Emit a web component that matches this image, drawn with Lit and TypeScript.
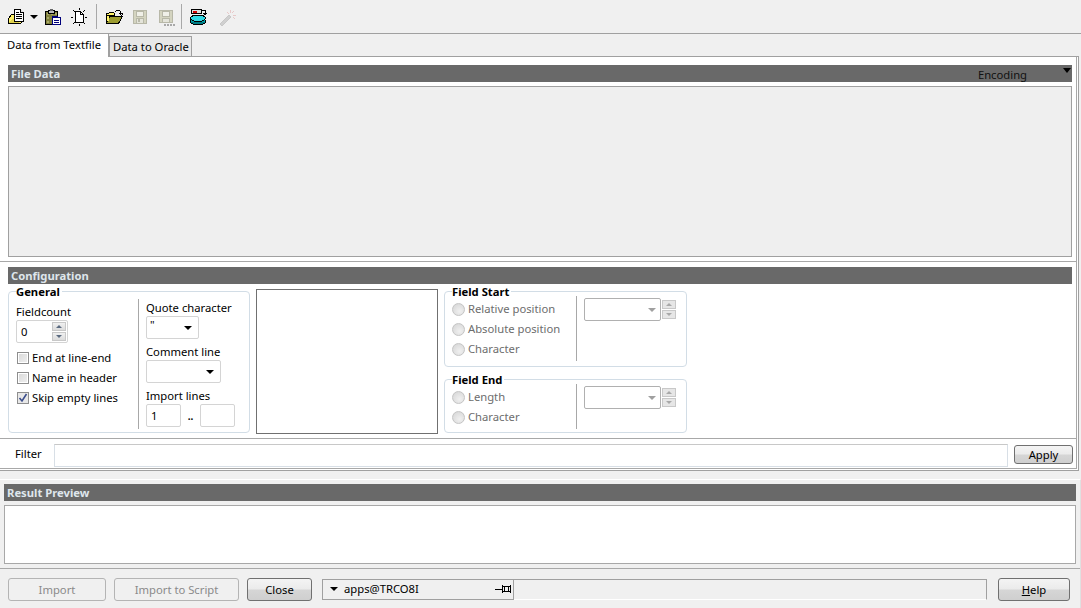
import { LitElement, html, css, svg } from "lit";
import { customElement } from "lit/decorators.js";

const I = {
  newList: svg`<path d="M1.500 10.500l3-4h4v6h7v1l-2 2h-12z" fill="#fff36a" stroke="#000"/><path d="M2 15l3-4h9l-2 4z" fill="#e0d24e"/><path d="M7.500 1.500h6l3 3v9h-9z" fill="#fff" stroke="#000"/><path d="M9 4h3M9 6h6M9 8h6M9 10h6" stroke="#000"/><path d="M13.500 1.500v3h3" fill="#ddd" stroke="#000"/>`,
  clip: svg`<path d="M1.500 3.500h12v13h-12z" fill="#80803c" stroke="#000"/><path d="M3 5h2v2H3zM7 5h2v2H7zM11 5h2v2h-2zM3 9h2v2H3zM3 13h2v2H3z" fill="#a8a868"/><path d="M4.500 2.500h6v3h-6z" fill="#bdbdbd" stroke="#000"/><path d="M6 1h3v2H6z" fill="#666"/><path d="M8.500 9.500h8v7h-8z" fill="#fff" stroke="#00007b"/><path d="M8 8h6v2H8z" fill="#00007b"/><path d="M10 12h5M10 14h5" stroke="#00007b"/>`,
  sun: svg`<path d="M5.500 3.500h5l3 3v8h-8z" fill="#fff" stroke="#000"/><path d="M10.500 3.500v3h3" fill="none" stroke="#000"/><path d="M3 2l2 2M15 2l-2 2M1 9h2M15 9h2M3 16l2-2M13 14l2 2M9 0v2M9 16v2" stroke="#000" fill="none"/>`,
  open: svg`<path d="M1.500 5.500h2l1-1h4l1 1v2h-8z" fill="#fff36a" stroke="#000"/><path d="M1.500 15.500l3-7h13l-4 7z" fill="#9c9c30" stroke="#000"/><path d="M1.500 5.500v10" stroke="#000"/><path d="M2 8h2v5H2z" fill="#fff36a"/><path d="M9.500 4.500l2-2h3l2 3M15 5.500h3l-1.500 2z" fill="none" stroke="#000"/>`,
  save: svg`<path d="M1.500 2.500h13v13h-13z" fill="#d4d4c0" stroke="#b8b8a8"/><path d="M4.500 3h7v5h-7z" fill="#f0f0e8" stroke="#b8b8a8"/><path d="M4.500 10.500h7v5h-7z" fill="#e4e4da" stroke="#b8b8a8"/><path d="M6 11h2v3H6z" fill="#b8b8a8"/>`,
  saveAll: svg`<path d="M1.500 2.500h13v12h-13z" fill="#d4d4c0" stroke="#b8b8a8"/><path d="M4.500 3h7v5h-7z" fill="#f0f0e8" stroke="#b8b8a8"/><path d="M4.500 10.500h7v4h-7z" fill="#e4e4da" stroke="#b8b8a8"/><path d="M6 16h2v2H6zM9 16h2v2H9zM12 16h2v2h-2zM15 16h2v2h-2z" fill="#a8a8a8"/>`,
  db: svg`<ellipse cx="9" cy="13.500" rx="7.500" ry="3.500" fill="#007c84" stroke="#000"/><path d="M2 10v3.500h14V10z" fill="#00a0a8"/><ellipse cx="9" cy="10.300" rx="7.500" ry="3.300" fill="#30d8e4" stroke="#000"/><path d="M2.500 1.500h10v4h-10z" fill="#dcdcdc" stroke="#000"/><path d="M4 3h4v2H4z" fill="#d00000"/><path d="M13 2h3v4M14.500 5l1.500 2 1.500-2" fill="none" stroke="#000"/>`,
  wand: svg`<path d="M2 16l9-9 2 2-9 9z" fill="#d0d0d0" stroke="#c8c8c8"/><path d="M12 2v3M14 5l2-2M15 7h3M9 4l2 2M15 9l2 2" stroke="#e8c8c8"/>`,
};

@customElement("app-root")
export class AppRoot extends LitElement {
  static styles = css`
    :host { display: flex; flex-direction: column; width: 1081px; height: 608px; overflow: hidden; background: #f0f0f0;
      font: 11.25px/16px "Noto Sans", sans-serif; color: #000; }
    * { box-sizing: border-box; }
    svg { display: block; flex: none; }
    .toolbar { height: 34px; flex: none; display: flex; align-items: center; padding-left: 7px; border-bottom: 1px solid #a0a0a0; }
    .sep { width: 1px; height: 25px; background: #a8a8a8; flex: none; }
    .arrow { width: 0; height: 0; border: 4px solid transparent; border-top: 4px solid #000; border-bottom: 0; flex: none; }
    .ml5 { margin-left: 5px; } .ml6 { margin-left: 6px; } .ml7 { margin-left: 7px; } .ml8 { margin-left: 8px; } .ml9 { margin-left: 9px; } .ml11 { margin-left: 11px; }
    .tabs { height: 22px; flex: none; display: flex; align-items: flex-end; white-space: nowrap; }
    .tab { height: 23px; width: 109px; background: #fff; padding: 3px 0 0 7px; margin-bottom: -1px; border-right: 1px solid #a0a0a0; position: relative; z-index: 1; }
    .tab2 { height: 20px; width: 83px; background: #e8e8e8; border: 1px solid #a0a0a0; border-bottom: 0; padding: 2px 0 0 3px; }
    .panel { height: 415px; width: 1079px; flex: none; background: #fff; border-top: 1px solid #a0a0a0; border-right: 1px solid #a0a0a0; border-bottom: 1px solid #a0a0a0; padding: 0 1px 1px 0; display: flex; flex-direction: column; }
    .inner { flex: 1; display: flex; flex-direction: column; padding: 8px 4px 0 8px; border-right: 1px solid #a8a8a8; border-bottom: 1px solid #a8a8a8; min-height: 0; }
    .head { height: 17px; flex: none; background: #696969; color: #dfe6ec; font-weight: 700; padding-left: 3px; line-height: 18px; display: flex; justify-content: space-between; }
    .enc { color: #111; font-weight: 400; margin-left: auto; margin-right: 36px; padding-top: 1px; }
    .encArrow { margin: 3px 1px 0 0; border-width: 4px; border-top-width: 5px; }
    .filebox { height: 171px; flex: none; margin-top: 4px; background: #efefef; border: 1px solid #a0a0a0; }
    .rule { height: 1px; background: #a8a8a8; flex: none; margin: 4px -4px 0 -8px; }
    .confhead { margin-top: 5px; }
    .config { display: flex; height: 150px; flex: none; margin-top: 4px; }
    .group { border: 1px solid #d2dde6; border-radius: 4px; position: relative; background: #fff; }
    .legend { position: absolute; left: 7px; top: -7px; line-height: 14px; font-weight: 700; color: #000; background: #fff; padding-right: 2px; }
    .general { width: 242px; height: 142px; margin-top: 3px; display: flex; padding-top: 7px; }
    .gl { width: 129px; flex: none; padding-left: 7px; padding-top: 5px; }
    .vdiv { width: 1px; background: #a8a8a8; flex: none; }
    .gdiv { height: 130px; }
    .gr { padding-left: 7px; flex: 1; }
    .lbl { height: 16px; display: block; }
    .input { border: 1px solid #d4d4d4; border-radius: 2px; background: #fff; display: flex; align-items: center; padding-left: 4px; position: relative; color: #000; }
    .spinin { width: 52px; height: 23px; margin: 0 0 5px; }
    .spin { margin-left: auto; margin-right: 1px; display: flex; flex-direction: column; gap: 1px; width: 14px; }
    .spin b { display: flex; align-items: center; justify-content: center; height: 9px; width: 14px; background: linear-gradient(#f0f0f0, #dcdcdc); border: 1px solid #c8c8c8; }
    .up { width: 0; height: 0; border: 3px solid transparent; border-bottom: 3px solid #5a6a80; border-top: 0; }
    .dn { width: 0; height: 0; border: 3px solid transparent; border-top: 3px solid #5a6a80; border-bottom: 0; }
    .check { display: flex; align-items: center; height: 20px; gap: 3px; margin-left: 1px; }
    .box { width: 12px; height: 12px; border: 1px solid #8e8e8e; background: linear-gradient(135deg, #d8d8d8, #f0f0f0); box-shadow: inset 0 0 0 1px #fff; flex: none; display: block; }
    .cb { display: flex; align-items: center; justify-content: space-between; padding: 0 6px 0 3px; color: #000; }
    .tri { width: 0; height: 0; border: 4px solid transparent; border-top: 4px solid #000; border-bottom: 0; }
    .quote { width: 53px; height: 23px; margin-bottom: 5px; align-items: flex-start; }
    .quote .tri { margin-top: 9px; }
    .comment { width: 75px; height: 23px; margin-bottom: 5px; }
    .q1 { margin-top: 1px; }
    .lines { display: flex; align-items: center; }
    .ln { width: 35px; height: 23px; }
    .dots { width: 19px; text-align: center; font-weight: 700; font-size: 10px; line-height: 18px; }
    .preview { width: 182px; height: 145px; margin: 1px 0 0 6px; background: #fff; border: 1px solid #707070; flex: none; }
    .fields { display: flex; flex-direction: column; margin: 3px 0 0 6px; }
    .fs { width: 243px; height: 76px; display: flex; }
    .fe { width: 243px; height: 54px; display: flex; margin-top: 12px; }
    .radios { width: 131px; flex: none; padding: 7px 0 0 7px; }
    .radio { display: flex; align-items: center; gap: 3px; height: 20px; color: #6d6d6d; }
    .dot { width: 13px; height: 13px; border-radius: 50%; border: 1px solid #c4c4c4; background: radial-gradient(circle at 60% 65%, #f0f0f0, #d4d4d4); flex: none; display: block; }
    .fdiv1 { height: 65px; margin-top: 4px; }
    .fdiv2 { height: 45px; margin-top: 4px; }
    .fcombo { display: flex; margin: 6px 0 0 7px; gap: 1px; height: 23px; }
    .fc { width: 77px; height: 23px; border: 1px solid #b0b0b0; border-radius: 2px; background: #fff; display: flex; align-items: center; justify-content: flex-end; padding-right: 4px; }
    .tg { width: 0; height: 0; border: 4px solid transparent; border-top: 4px solid #a0a0a0; border-bottom: 0; }
    .fspin { display: flex; flex-direction: column; gap: 1px; margin-top: 2px; }
    .fspin b { width: 14px; height: 9px; background: #e6e6e6; border: 1px solid #c8c8c8; display: flex; align-items: center; justify-content: center; }
    .fspin .up { border-bottom-color: #a8a8a8; } .fspin .dn { border-top-color: #a8a8a8; }
    .filterLine { height: 1px; background: #a8a8a8; flex: none; margin: 0 -4px 0 -8px; }
    .filter { display: flex; flex: 1; align-items: flex-start; padding: 5px 0 0 7px; margin-right: -4px; }
    .filter span { width: 39px; flex: none; line-height: 19px; }
    .finput { width: 954px; height: 23px; border: 1px solid #d8dfe6; border-top-color: #c8c8c8; background: #fff; flex: none; }
    .btn { border: 1px solid #707070; border-radius: 3px; background: linear-gradient(#f4f4f4 0%, #ebebeb 48%, #d6d6d6 52%, #cfcfcf 100%); text-align: center; flex: none; }
    .apply { width: 59px; height: 19px; margin: 1px 0 0 6px; line-height: 17px; }
    .lower { flex: 1; margin-top: 8px; padding: 0 4px; display: flex; flex-direction: column; border-top: 1px solid #fff; border-right: 1px solid #e0e0e0; }
    .lowerhead { margin-top: 4px; padding-left: 3px; }
    .result { height: 59px; flex: none; margin-top: 4px; background: #fff; border: 1px solid #a8a8a8; }
    .rule2 { height: 1px; background: #a8a8a8; flex: none; margin: 4px -4px 0; }
    .bar { display: flex; flex: 1; align-items: center; padding: 2px 7px 0 8px; margin: 0 -4px; }
    .b { height: 23px; line-height: 21px; }
    .dis { background: #f0f0f0; border-color: #b4b4b4; color: #8a8a8a; }
    .imp { width: 98px; } .imps { width: 125px; margin-left: 8px; } .close { width: 65px; margin-left: 8px; }
    .conn { width: 192px; height: 21px; margin: -1px 0 0 10px; border: 1px solid #a0a0a0; display: flex; align-items: center; padding-left: 7px; gap: 6px; flex: none; }
    .status { width: 473px; height: 21px; margin-top: -1px; border: 1px solid #a0a0a0; border-left: 0; border-bottom-color: #fff; border-right-color: #a0a0a0; flex: none; }
    .help { width: 72px; margin-left: 11px; }
    .pin { margin-left: auto; margin-right: 0; }
  `;

  private ic(p: unknown, cls = "") {
    return html`<svg class=${cls} width="18" height="18" viewBox="0 0 18 18" shape-rendering="crispEdges">${p}</svg>`;
  }

  render() {
    const up = html`<i class="up"></i>`;
    const dn = html`<i class="dn"></i>`;
    const fcombo = html`<div class="fcombo"><div class="fc"><i class="tg"></i></div><div class="fspin"><b>${up}</b><b>${dn}</b></div></div>`;
    return html`
      <div class="toolbar">
        ${this.ic(I.newList)}<i class="arrow ml5"></i>${this.ic(I.clip, "ml6")}${this.ic(I.sun, "ml8")}
        <i class="sep ml8"></i>${this.ic(I.open, "ml8")}${this.ic(I.save, "ml9")}${this.ic(I.saveAll, "ml8")}
        <i class="sep ml5"></i>${this.ic(I.db, "ml7")}${this.ic(I.wand, "ml11")}
      </div>
      <div class="tabs"><div class="tab">Data from Textfile</div><div class="tab2">Data to Oracle</div></div>
      <div class="panel"><div class="inner">
        <div class="head">File Data<span class="enc">Encoding</span><i class="arrow encArrow"></i></div>
        <div class="filebox"></div>
        <div class="rule"></div>
        <div class="head confhead">Configuration</div>
        <div class="config">
          <div class="group general">
            <span class="legend">General</span>
            <div class="gl">
              <span class="lbl">Fieldcount</span>
              <div class="input spinin">0<div class="spin"><b>${up}</b><b>${dn}</b></div></div>
              <div class="check"><i class="box"></i>End at line-end</div>
              <div class="check"><i class="box"></i>Name in header</div>
              <div class="check"><svg width="12" height="12" viewBox="0 0 12 12"><rect x=".5" y=".5" width="11" height="11" fill="#e8e8e8" stroke="#8e8e8e"/><path d="M2.500 6l2.500 3 4.500-7" fill="none" stroke="#3c4e8c" stroke-width="1.600"/></svg>Skip empty lines</div>
            </div>
            <i class="vdiv gdiv"></i>
            <div class="gr">
              <span class="lbl q1">Quote character</span>
              <div class="input cb quote">"<i class="tri"></i></div>
              <span class="lbl">Comment line</span>
              <div class="input cb comment"><span></span><i class="tri"></i></div>
              <span class="lbl">Import lines</span>
              <div class="lines"><div class="input ln">1</div><span class="dots">..</span><div class="input ln"></div></div>
            </div>
          </div>
          <div class="preview"></div>
          <div class="fields">
            <div class="group fs">
              <span class="legend">Field Start</span>
              <div class="radios">
                <div class="radio"><i class="dot"></i>Relative position</div>
                <div class="radio"><i class="dot"></i>Absolute position</div>
                <div class="radio"><i class="dot"></i>Character</div>
              </div>
              <i class="vdiv fdiv1"></i>${fcombo}
            </div>
            <div class="group fe">
              <span class="legend">Field End</span>
              <div class="radios">
                <div class="radio"><i class="dot"></i>Length</div>
                <div class="radio"><i class="dot"></i>Character</div>
              </div>
              <i class="vdiv fdiv2"></i>${fcombo}
            </div>
          </div>
        </div>
        <div class="filterLine"></div>
        <div class="filter"><span>Filter</span><div class="finput"></div><div class="btn apply">Apply</div></div>
      </div></div>
      <div class="lower">
        <div class="head lowerhead">Result Preview</div>
        <div class="result"></div>
        <div class="rule2"></div>
        <div class="bar">
          <div class="btn b dis imp">Import</div>
          <div class="btn b dis imps">Import to Script</div>
          <div class="btn b close">Close</div>
          <div class="conn"><i class="tri"></i>apps@TRCO8I
            <svg class="pin" width="18" height="12" viewBox="0 0 18 12" shape-rendering="crispEdges"><path d="M0 6h7M7.500 2v8M15.500 2v8M8 3h7M8 8h7M9 3v5M13 3v5" stroke="#000" fill="none"/></svg>
          </div>
          <div class="status"></div>
          <div class="btn b help"><u>H</u>elp</div>
        </div>
      </div>
    `;
  }
}
